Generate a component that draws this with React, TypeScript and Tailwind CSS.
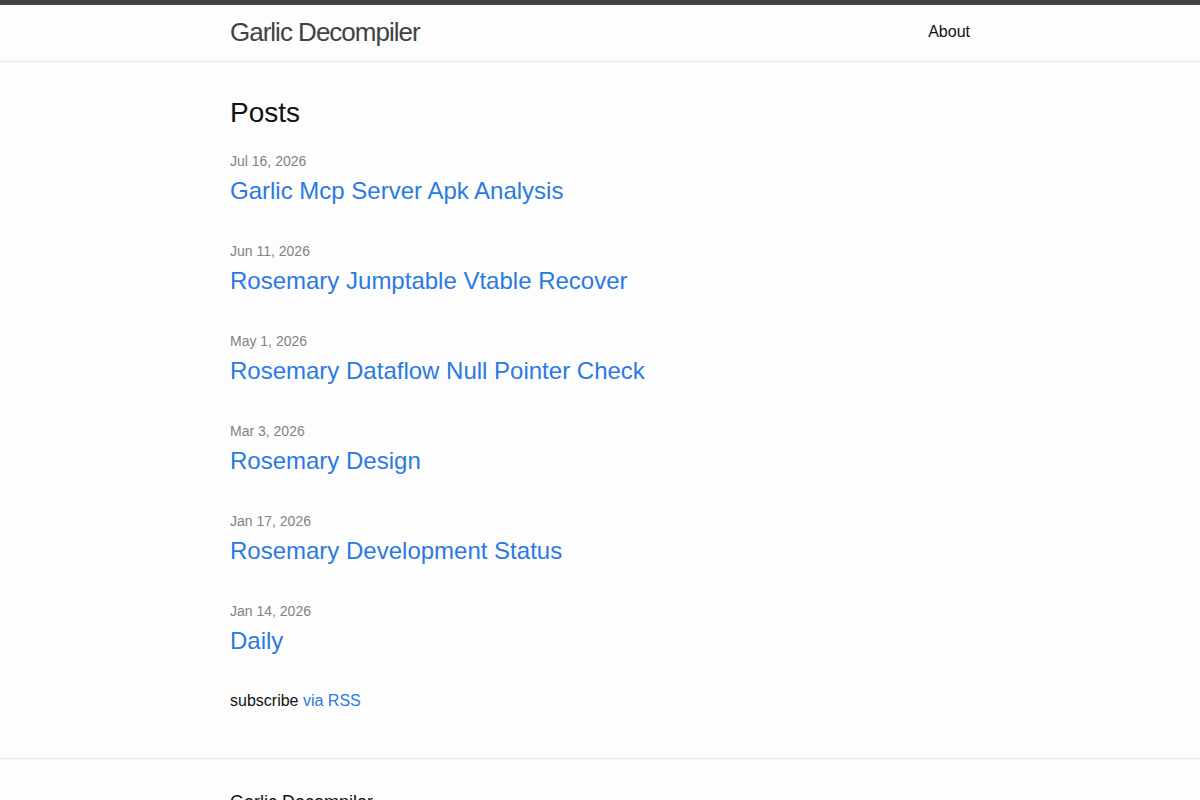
const posts = [
  { date: 'Jul 16, 2026', title: 'Garlic Mcp Server Apk Analysis' },
  { date: 'Jun 11, 2026', title: 'Rosemary Jumptable Vtable Recover' },
  { date: 'May 1, 2026', title: 'Rosemary Dataflow Null Pointer Check' },
  { date: 'Mar 3, 2026', title: 'Rosemary Design' },
  { date: 'Jan 17, 2026', title: 'Rosemary Development Status' },
  { date: 'Jan 14, 2026', title: 'Daily' },
];

export default function App() {
  return (
    <div className="min-h-screen bg-[#fdfdfd] text-[#111] font-['Liberation_Sans',Arial,sans-serif] text-base leading-normal">
      {/* Header */}
      <header className="border-t-[5px] border-t-[#424242] border-b border-b-[#e8e8e8]">
        <div className="max-w-[740px] mx-auto flex items-start justify-between h-[56px]">
          <a href="#" className="text-[26px] leading-[54px] tracking-[-1px] font-light text-[#424242]">
            Garlic Decompiler
          </a>
          <nav className="leading-[54px]">
            <a href="#" className="text-[#111]">About</a>
          </nav>
        </div>
      </header>

      {/* Content */}
      <main className="py-[30px]">
        <div className="max-w-[740px] mx-auto">
          <h1 className="text-[28px] leading-[42px] mb-[17px]">Posts</h1>
          <ul className="flex flex-col gap-[32px]">
            {posts.map((p) => (
              <li key={p.title}>
                <span className="block text-sm leading-[21px] text-[#828282]">{p.date}</span>
                <h3 className="mt-[1px]">
                  <a href="#" className="block text-2xl leading-[36px] text-[#2a7ae2]">
                    {p.title}
                  </a>
                </h3>
              </li>
            ))}
          </ul>
          <p className="mt-[30px] mb-[15px]">
            subscribe <a href="#" className="text-[#2a7ae2]">via RSS</a>
          </p>
        </div>
      </main>

      {/* Footer */}
      <footer className="border-t border-t-[#e8e8e8] py-[30px]">
        <div className="max-w-[740px] mx-auto">
          <h2 className="text-lg leading-[27px] mb-[15px]">Garlic Decompiler</h2>
          <div className="flex gap-8 text-[15px] text-[#828282]">
            <ul>
              <li>Garlic Decompiler</li>
            </ul>
          </div>
        </div>
      </footer>
    </div>
  );
}
